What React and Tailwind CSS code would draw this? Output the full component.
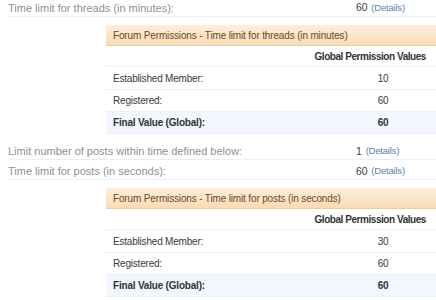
const threadRows = [
    { label: "Established Member:", value: "10", h: "h-[23px]" },
    { label: "Registered:", value: "60", h: "h-[22px]" },
];

const postRows = [
    { label: "Established Member:", value: "30", h: "h-[23px]" },
    { label: "Registered:", value: "60", h: "h-[22px]" },
];

const OptionRow = ({ label, value, className = "h-5 pt-[4px]" }) => (
    <div className={`ml-2 flex items-center border-b border-[#e9eef3] ${className}`}>
        <span className="w-[348px] text-[11px] text-[#8f8f8f]">{label}</span>
        <span className="text-[10.5px] tracking-[-0.2px] text-[#3d3d3d]">{value}</span>
        <span className="ml-[4px] text-[9.5px] tracking-[-0.2px] text-[#5b82ae]">(Details)</span>
    </div>
);

const PermissionTable = ({ title, rows, final }) => (
    <div className="ml-[106px] mt-2 tracking-[-0.2px]">
        <div className="flex h-[21px] items-center border-b border-[#f0cc9c] bg-gradient-to-b from-[#fdeedb] to-[#f9dcb6] pl-[7px] text-[10px] tracking-[-0.15px] text-[#6b4a24]">
            {title}
        </div>
        <div className="flex h-[21px] items-center justify-end border-b border-[#e6eef6] pr-[10px] text-[10px] font-bold tracking-[-0.45px] text-[#333]">
            Global Permission Values
        </div>
        {rows.map((row) => (
            <div
                key={row.label}
                className={`flex ${row.h} items-center border-b border-[#e6eef6] text-[10px] text-[#3a3a3a]`}
            >
                <span className="w-[224px] pl-[7px]">{row.label}</span>
                <span className="flex-1 text-center">{row.value}</span>
            </div>
        ))}
        <div className="flex h-[22px] items-center border-b border-[#e6eef6] bg-[#f1f7fc] text-[10px] font-bold text-[#333]">
            <span className="w-[224px] pl-[7px]">Final Value (Global):</span>
            <span className="flex-1 text-center">{final}</span>
        </div>
    </div>
);

export default function App() {
    return (
        <div className="h-[300px] w-[436px] overflow-hidden bg-white font-['Liberation_Sans',Arial,sans-serif]">
            <OptionRow
                label="Time limit for threads (in minutes):"
                value="60"
                className="h-[17px]"
            />
            <PermissionTable
                title="Forum Permissions - Time limit for threads (in minutes)"
                rows={threadRows}
                final="60"
            />
            <div className="mt-[6px]">
                <OptionRow label="Limit number of posts within time defined below:" value="1" />
                <OptionRow label="Time limit for posts (in seconds):" value="60" />
            </div>
            <PermissionTable
                title="Forum Permissions - Time limit for posts (in seconds)"
                rows={postRows}
                final="60"
            />
        </div>
    );
}
